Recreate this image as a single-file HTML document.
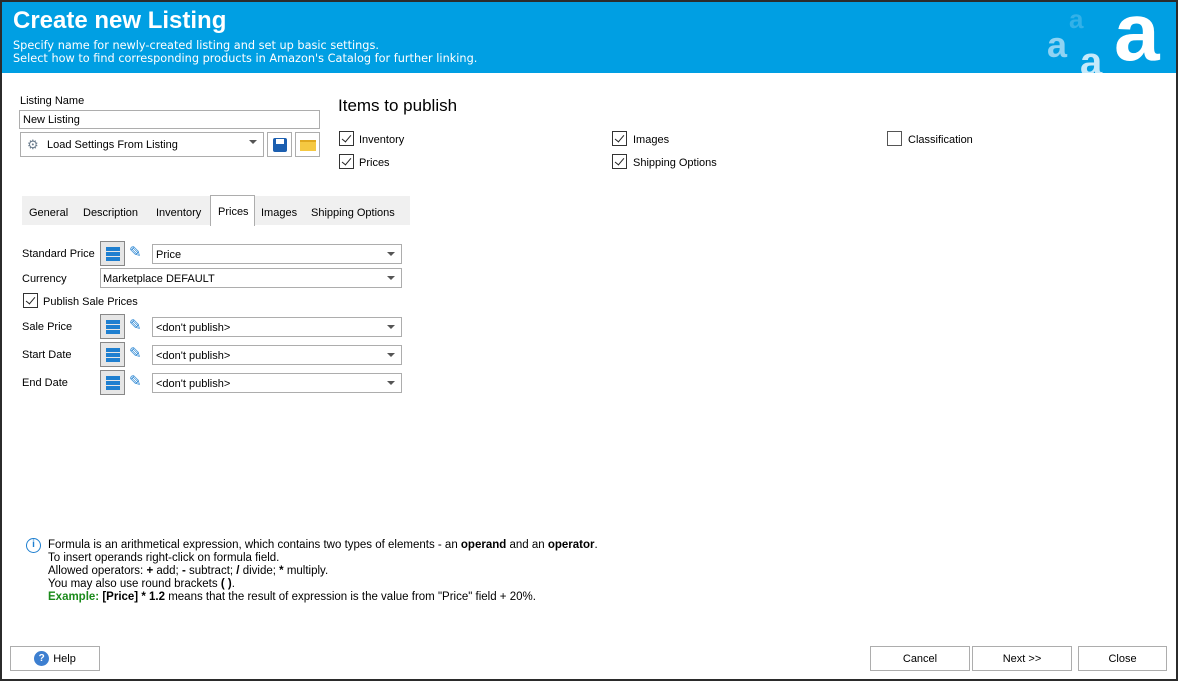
<!DOCTYPE html>
<html><head><meta charset="utf-8"><style>
*{box-sizing:border-box;margin:0;padding:0}
body{width:1178px;height:681px;background:#fff;font-family:"Liberation Sans",sans-serif;font-size:11px;color:#000;position:relative;overflow:hidden}
.win{position:absolute;left:0;top:0;width:1178px;height:681px;border:2px solid #2b2b2b}
.a{position:absolute;white-space:nowrap}
.hdr{position:absolute;left:2px;top:2px;width:1174px;height:71px;background:#009fe3;color:#fff;overflow:hidden}
.box{position:absolute;border:1px solid #adadad;background:#fff}
.cb{position:absolute;width:15px;height:15px;border:1px solid #333;background:#fff}
.cb:after{content:"";position:absolute;left:4px;top:1px;width:4px;height:8px;border:solid #222;border-width:0 1.5px 1.5px 0;transform:rotate(40deg)}
.nc:after{display:none}
.dd:after{content:"";position:absolute;right:6px;top:7px;border:4px solid transparent;border-top:4px solid #555;border-bottom:0}
.fb{position:absolute;width:25px;height:25px;border:1px solid #888;background:#e6e6e6}
.fb i{position:absolute;left:5px;width:14px;height:4px;background:#1e7fd0}
.btn{position:absolute;border:1px solid #adadad;background:#fff;display:flex;align-items:center;justify-content:center;font-size:11px}
</style></head><body>
<div class="hdr">
<div class="a" style="left:11px;top:5px;font-size:24px;font-weight:bold;font-family:'Liberation Sans',sans-serif">Create new Listing</div>
<div class="a" style="left:11px;top:37px;line-height:13px;font-family:'DejaVu Sans',sans-serif;font-size:11.3px">Specify name for newly-created listing and set up basic settings.<br>Select how to find corresponding products in Amazon's Catalog for further linking.</div>
<div class="a" style="left:1067px;top:2px;font-size:26px;font-weight:bold;color:#33b1e8">a</div>
<div class="a" style="left:1045px;top:22px;font-size:36px;font-weight:bold;color:#8fd3f3">a</div>
<div class="a" style="left:1078px;top:38px;font-size:40px;font-weight:bold;color:#c6e9fa">a</div>
<div class="a" style="left:1112px;top:-16px;font-size:82px;font-weight:bold;color:#fff">a</div>
</div>
<div class="win"></div>

<div class="a" style="left:20px;top:95px">Listing Name</div>
<div class="box" style="left:19px;top:110px;width:301px;height:19px"><span class="a" style="left:3px;top:3px">New Listing</span></div>
<div class="box dd" style="left:20px;top:132px;width:244px;height:25px"><span class="a" style="left:6px;top:4px;color:#6a7b8c;font-size:13px">⚙</span><span class="a" style="left:26px;top:6px">Load Settings From Listing</span></div>
<div class="box" style="left:267px;top:132px;width:25px;height:25px"><div class="a" style="left:5px;top:5px;width:14px;height:14px;background:#1c5fb0;border-radius:2px"><div class="a" style="left:3px;top:1px;width:8px;height:5px;background:#fff"></div></div></div>
<div class="box" style="left:295px;top:132px;width:25px;height:25px"><div class="a" style="left:4px;top:7px;width:16px;height:11px;background:#f5c842;border-top:2px solid #e0a820"></div></div>

<div class="a" style="left:338px;top:96px;font-size:17px">Items to publish</div>
<div class="cb" style="left:339px;top:131px"></div><div class="a" style="left:359px;top:134px">Inventory</div>
<div class="cb" style="left:339px;top:154px"></div><div class="a" style="left:359px;top:157px">Prices</div>
<div class="cb" style="left:612px;top:131px"></div><div class="a" style="left:633px;top:134px">Images</div>
<div class="cb" style="left:612px;top:154px"></div><div class="a" style="left:633px;top:157px">Shipping Options</div>
<div class="cb nc" style="left:887px;top:131px;border-color:#555"></div><div class="a" style="left:908px;top:134px">Classification</div>

<div class="a" style="left:22px;top:196px;width:388px;height:29px;background:#f0f0f0"></div>
<div class="a" style="left:210px;top:195px;width:45px;height:31px;background:#fff;border:1px solid #adadad;border-bottom:none"></div>
<div class="a" style="left:29px;top:207px">General</div>
<div class="a" style="left:83px;top:207px">Description</div>
<div class="a" style="left:156px;top:207px">Inventory</div>
<div class="a" style="left:218px;top:206px">Prices</div>
<div class="a" style="left:261px;top:207px">Images</div>
<div class="a" style="left:311px;top:207px">Shipping Options</div>

<div class="a" style="left:22px;top:248px">Standard Price</div>
<div class="fb" style="left:100px;top:241px"><i style="top:5px"></i><i style="top:10px"></i><i style="top:15px"></i></div>
<div class="a" style="left:129px;top:243px;color:#1e7fd0;font-size:15px">✎</div>
<div class="box dd" style="left:152px;top:244px;width:250px;height:20px"><span class="a" style="left:3px;top:4px">Price</span></div>
<div class="a" style="left:22px;top:273px">Currency</div>
<div class="box dd" style="left:100px;top:268px;width:302px;height:20px"><span class="a" style="left:2px;top:4px">Marketplace DEFAULT</span></div>
<div class="cb" style="left:23px;top:293px"></div><div class="a" style="left:43px;top:296px">Publish Sale Prices</div>

<div class="a" style="left:22px;top:321px">Sale Price</div>
<div class="fb" style="left:100px;top:314px"><i style="top:5px"></i><i style="top:10px"></i><i style="top:15px"></i></div>
<div class="a" style="left:129px;top:316px;color:#1e7fd0;font-size:15px">✎</div>
<div class="box dd" style="left:152px;top:317px;width:250px;height:20px"><span class="a" style="left:3px;top:4px">&lt;don't publish&gt;</span></div>
<div class="a" style="left:22px;top:349px">Start Date</div>
<div class="fb" style="left:100px;top:342px"><i style="top:5px"></i><i style="top:10px"></i><i style="top:15px"></i></div>
<div class="a" style="left:129px;top:344px;color:#1e7fd0;font-size:15px">✎</div>
<div class="box dd" style="left:152px;top:345px;width:250px;height:20px"><span class="a" style="left:3px;top:4px">&lt;don't publish&gt;</span></div>
<div class="a" style="left:22px;top:377px">End Date</div>
<div class="fb" style="left:100px;top:370px"><i style="top:5px"></i><i style="top:10px"></i><i style="top:15px"></i></div>
<div class="a" style="left:129px;top:372px;color:#1e7fd0;font-size:15px">✎</div>
<div class="box dd" style="left:152px;top:373px;width:250px;height:20px"><span class="a" style="left:3px;top:4px">&lt;don't publish&gt;</span></div>

<div class="a" style="left:26px;top:538px;width:15px;height:15px;border:1.5px solid #1e7fd0;border-radius:50%;color:#1e7fd0;font-size:10px;font-weight:bold;text-align:center;line-height:12px">i</div>
<div class="a" style="left:48px;top:539px;line-height:13px;font-size:11.5px">Formula is an arithmetical expression, which contains two types of elements - an <b>operand</b> and an <b>operator</b>.<br>To insert operands right-click on formula field.<br>Allowed operators: <b>+</b> add; <b>-</b> subtract; <b>/</b> divide; <b>*</b> multiply.<br>You may also use round brackets <b>( )</b>.<br><b style="color:#1a8a1a">Example:</b> <b>[Price] * 1.2</b> means that the result of expression is the value from "Price" field + 20%.</div>

<div class="btn" style="left:10px;top:646px;width:90px;height:25px"><span style="display:inline-block;width:15px;height:15px;border-radius:50%;background:#3d7fd0;color:#fff;font-size:10px;line-height:15px;font-weight:bold;text-align:center;margin-right:4px">?</span>Help</div>
<div class="btn" style="left:870px;top:646px;width:100px;height:25px">Cancel</div>
<div class="btn" style="left:972px;top:646px;width:100px;height:25px">Next &gt;&gt;</div>
<div class="btn" style="left:1078px;top:646px;width:89px;height:25px">Close</div>
</body></html>
